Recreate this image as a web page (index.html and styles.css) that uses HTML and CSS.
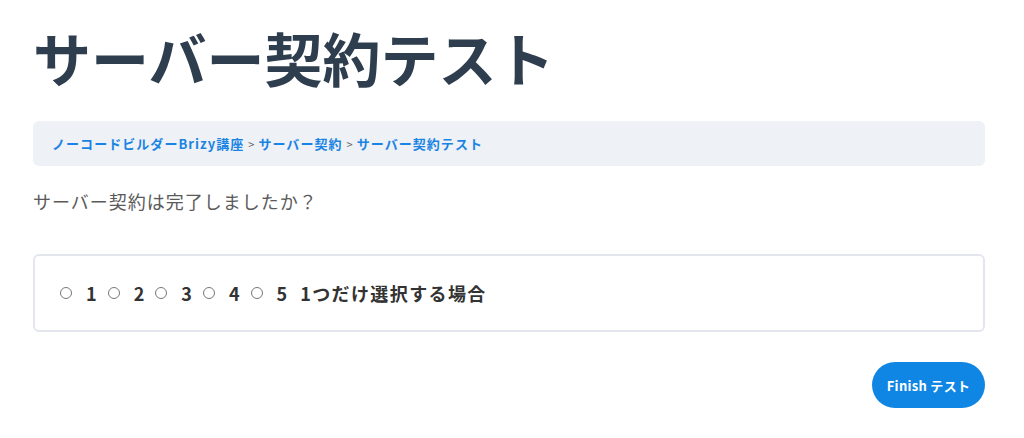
FILE: index.html
```html
<!DOCTYPE html>
<html lang="ja">
<head>
<meta charset="utf-8">
<link rel="stylesheet" href="styles.css">
</head>
<body>
<div class="page">
  <h1 class="title">サーバー契約テスト</h1>
  <nav class="crumbs">
    <a class="crumb">ノーコードビルダーBrizy講座</a>
    <span class="sep">&gt;</span>
    <a class="crumb">サーバー契約</a>
    <span class="sep">&gt;</span>
    <a class="crumb">サーバー契約テスト</a>
  </nav>
  <p class="question">サーバー契約は完了しましたか？</p>
  <div class="answers">
    <label class="opt"><span class="radio"></span>1</label>
    <label class="opt"><span class="radio"></span>2</label>
    <label class="opt"><span class="radio"></span>3</label>
    <label class="opt"><span class="radio"></span>4</label>
    <label class="opt"><span class="radio"></span>5</label>
    <span class="hint">1つだけ選択する場合</span>
  </div>
  <div class="actions">
    <button class="finish">Finish テスト</button>
  </div>
</div>
</body>
</html>
```
FILE: styles.css
```css
html, body {
  margin: 0;
  padding: 0;
  background: #ffffff;
}
body {
  font-family: "Noto Sans CJK JP", "Noto Sans", sans-serif;
}
.page {
  width: 952px;
  margin-left: 33px;
  display: flex;
  flex-direction: column;
}
.title {
  margin: 16px 0 0 0;
  font-size: 58px;
  line-height: 82px;
  font-weight: 700;
  color: #2f3e4f;
}
.crumbs {
  margin-top: 23px;
  height: 45px;
  background: #eef1f5;
  border-radius: 6px;
  padding: 0 19px;
  display: flex;
  align-items: center;
  gap: 4px;
  font-size: 13px;
  font-weight: 700;
  letter-spacing: 1.05px;
}
.crumb {
  color: #1a84e4;
}
.sep {
  color: #666;
  font-size: 11px;
  font-weight: 400;
  letter-spacing: 0;
}
.question {
  margin: 22px 0 0 0;
  font-size: 18px;
  line-height: 26px;
  color: #5a5a5a;
  letter-spacing: 1px;
}
.answers {
  margin-top: 40px;
  height: 78px;
  box-sizing: border-box;
  border: 2px solid #e3e7ed;
  border-radius: 6px;
  padding: 0 25px;
  display: flex;
  align-items: center;
  font-size: 18px;
  font-weight: 700;
  color: #333;
}
.opt {
  display: flex;
  align-items: center;
  margin-right: 11px;
}
.radio {
  width: 10px;
  height: 10px;
  border: 1px solid #777;
  border-radius: 50%;
  margin-right: 14px;
}
.hint {
  margin-left: 2px;
  letter-spacing: 1.4px;
}
.actions {
  margin-top: 30px;
  display: flex;
  justify-content: flex-end;
}
.finish {
  width: 113px;
  height: 46px;
  border: none;
  border-radius: 23px;
  background: #0f86e4;
  color: #fff;
  font-family: "Noto Sans CJK JP", "Noto Sans", sans-serif;
  font-size: 13px;
  font-weight: 700;
  letter-spacing: 0.3px;
  padding: 0;
}
```
